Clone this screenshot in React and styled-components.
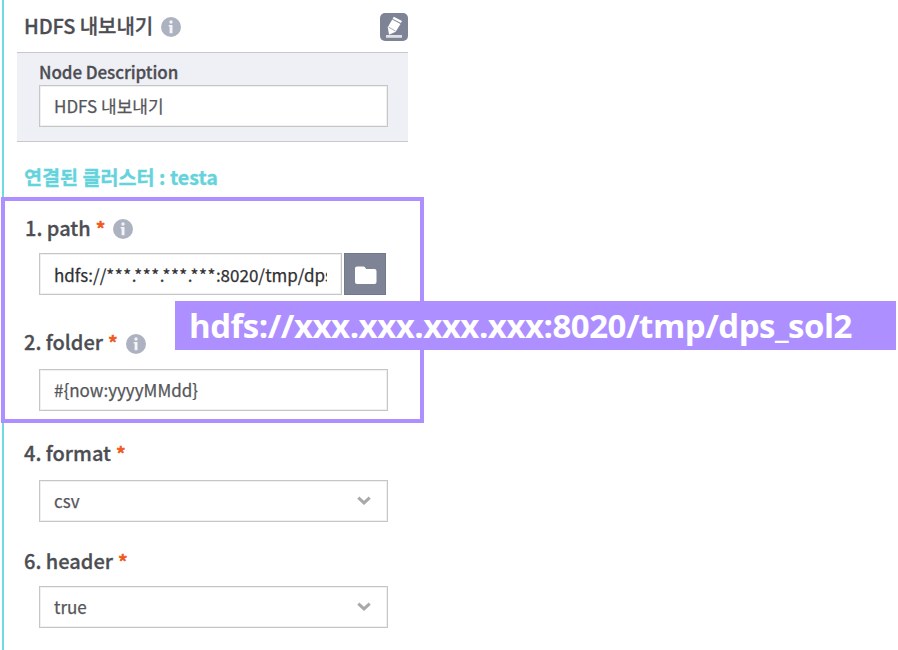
import React from "react";
import styled, { createGlobalStyle } from "styled-components";

const GlobalStyle = createGlobalStyle`
  *, *::before, *::after { box-sizing: border-box; }
  body {
    margin: 0;
    background: #fff;
    font-family: "Noto Sans CJK KR", "Noto Sans", sans-serif;
    color: #4c4d53;
    overflow: hidden;
  }
`;

const Page = styled.main`
  position: relative;
  width: 898px;
  height: 650px;
  padding-left: 2px;
  overflow: hidden;
`;

const Panel = styled.section`
  width: 422px;
  height: 650px;
  border-left: 2px solid #6fdae2;
  display: flex;
  flex-direction: column;
`;

const Header = styled.header`
  display: flex;
  align-items: center;
  gap: 8px;
  height: 52px;
  width: 404px;
  padding: 1px 0 0 20px;
`;

const Title = styled.h1`
  margin: 0;
  padding-bottom: 2px;
  font-size: 20px;
  line-height: 28px;
  font-weight: 500;
  letter-spacing: -0.1px;
  -webkit-text-stroke: 0.3px currentColor;
  white-space: nowrap;
`;

const EditButton = styled.button`
  width: 28px;
  height: 28px;
  margin-left: auto;
  padding: 0;
  border: 0;
  border-radius: 5px;
  background: #7e8496;
  display: flex;
`;

const Description = styled.div`
  margin-left: 13px;
  width: 391px;
  height: 90px;
  padding: 6px 0 0 22px;
  background: #eff0f5;
  border: solid #c9c9cb;
  border-width: 1px 0;
`;

const DescriptionLabel = styled.label`
  display: block;
  height: 26px;
  font-size: 17px;
  line-height: 25px;
  font-weight: 500;
  letter-spacing: -0.07px;
  -webkit-text-stroke: 0.3px currentColor;
`;

const Cluster = styled.h2`
  margin: 22px 0 0 20px;
  height: 33px;
  font-size: 19.6px;
  line-height: 26px;
  font-weight: 700;
  color: #64d3dc;
  -webkit-text-stroke: 0.3px currentColor;
  white-space: nowrap;
`;

const Highlight = styled.div`
  height: 226px;
  margin-left: -3px;
  width: 423px;
  border: 4px solid #ae8fff;
`;

const Field = styled.div`
  padding-left: ${(p) => p.$inset || "20px"};
  padding-top: ${(p) => p.$top || "0"};
`;

const Label = styled.div`
  display: flex;
  align-items: center;
  height: ${(p) => p.$height || "39px"};
  padding-bottom: ${(p) => p.$below || "11px"};
  font-size: 20px;
  line-height: 28px;
  font-weight: 500;
  -webkit-text-stroke: 0.3px currentColor;
`;

const Required = styled.span`
  color: #ee5a22;
  margin: 0 ${(p) => p.$after || "8px"} 0 5px;
  padding-top: 2px;
  -webkit-text-stroke: 0.7px currentColor;
`;

const Row = styled.div`
  display: flex;
  gap: 2px;
  margin-left: 15px;
`;

const Box = styled.div`
  display: flex;
  align-items: center;
  justify-content: space-between;
  width: ${(p) => p.$width || "349px"};
  height: 42px;
  padding: 0 14px;
  border: 1px solid #c6c6c6;
  box-shadow: inset 0 0 0 1px #f0f0f0;
  background: #fff;
  color: ${(p) => p.$color || "#55565a"};
`;

const Value = styled.span`
  flex: 1;
  min-width: 0;
  overflow: hidden;
  white-space: nowrap;
  padding-bottom: ${(p) => p.$below || "2px"};
  font-size: 17px;
  line-height: 25px;
  -webkit-text-stroke: 0.25px currentColor;
`;

const Mask = styled.span`
  letter-spacing: 0.53px;
`;

const FolderButton = styled.button`
  width: 42px;
  height: 42px;
  padding: 0;
  border: 1px solid #72798c;
  background: #7e8496;
  display: flex;
`;

const Banner = styled.div`
  position: absolute;
  left: 175px;
  top: 301px;
  width: 721px;
  height: 49px;
  padding-left: 14px;
  background: #ae8fff;
  color: #fff;
  font-family: "Open Sans", "Noto Sans", sans-serif;
  font-size: 33px;
  line-height: 50px;
  font-weight: 700;
  letter-spacing: -0.5px;
  white-space: nowrap;
`;

const InfoSvg = styled.svg`
  flex: none;
  margin-top: ${(p) => p.$drop || "0"};
`;

const InfoIcon = ({ drop }) => (
  <InfoSvg $drop={drop} width="20" height="20" viewBox="0 0 20 20">
    <circle cx="10" cy="10" r="10" fill="#adb2c0" />
    <circle cx="10" cy="5" r="1.7" fill="#f3f4f7" />
    <path d="M7.7 8H11.5V16.2H8.6V9.5H7.7Z" fill="#f3f4f7" />
  </InfoSvg>
);

const EditIcon = () => (
  <svg width="28" height="28" viewBox="0 0 28 28">
    <path d="M13.8 3.8 22 8 20.9 10 12.6 5.8Z" fill="#fff" />
    <path d="M12.2 6.6 20.5 10.9 15.7 18.7 9 21.8 7.8 14.3Z" fill="#fff" />
    <path d="M8.5 14.1 15.5 18" stroke="#a9adb9" strokeWidth="1" />
    <path d="M6 22H22V24.8H6Z" fill="#dfe1e6" />
  </svg>
);

const FolderIcon = () => (
  <svg width="40" height="40" viewBox="0 0 40 40">
    <path
      d="M12 12.5H18.5Q20 12.5 20.5 14L21 15H29.5Q31.5 15 31.5 17V28Q31.5 30 29.5 30H12Q10 30 10 28V14.5Q10 12.5 12 12.5Z"
      fill="#fff"
    />
  </svg>
);

const Chevron = () => (
  <svg width="16" height="12" viewBox="0 0 16 12">
    <path d="M1.3 2.7 7 7.9 12.7 2.7" fill="none" stroke="#a9a9a9" strokeWidth="3" />
  </svg>
);

export default function App() {
  return (
    <>
      <GlobalStyle />
      <Page>
        <Panel>
          <Header>
            <Title>HDFS 내보내기</Title>
            <InfoIcon />
            <EditButton aria-label="Edit">
              <EditIcon />
            </EditButton>
          </Header>
          <Description>
            <DescriptionLabel>Node Description</DescriptionLabel>
            <Box>
              <Value>HDFS 내보내기</Value>
            </Box>
          </Description>
          <Cluster>연결된 클러스터 : testa</Cluster>
          <Highlight>
            <Field $inset="20px" $top="13px">
              <Label>
                1. path<Required>*</Required>
                <InfoIcon drop="1px" />
              </Label>
              <Row as={PathRow}>
                <Box $width="303px" $color="#303033">
                  <Value $below="0">
                    hdfs://<Mask>***.***.***.***</Mask>:8020/tmp/dps_sol2
                  </Value>
                </Box>
                <FolderButton aria-label="Browse">
                  <FolderIcon />
                </FolderButton>
              </Row>
            </Field>
            <Field $inset="19px" $top="33px">
              <Label $height="41px" $below="13px">
                2. folder<Required>*</Required>
                <InfoIcon drop="3px" />
              </Label>
              <Row>
                <Box>
                  <Value>{"#{now:yyyyMMdd}"}</Value>
                </Box>
              </Row>
            </Field>
          </Highlight>
          <Field $top="16px">
            <Label $height="41px" $below="13px">
              4. format<Required>*</Required>
            </Label>
            <Row>
              <Box>
                <Value>csv</Value>
                <Chevron />
              </Box>
            </Row>
          </Field>
          <Field $top="25px">
            <Label>
              6. header<Required>*</Required>
            </Label>
            <Row>
              <Box>
                <Value>true</Value>
                <Chevron />
              </Box>
            </Row>
          </Field>
        </Panel>
        <Banner>hdfs://xxx.xxx.xxx.xxx:8020/tmp/dps_sol2</Banner>
      </Page>
    </>
  );
}

const PathRow = styled.div`
  display: flex;
  gap: 2px;
  margin-left: 14px;
`;
